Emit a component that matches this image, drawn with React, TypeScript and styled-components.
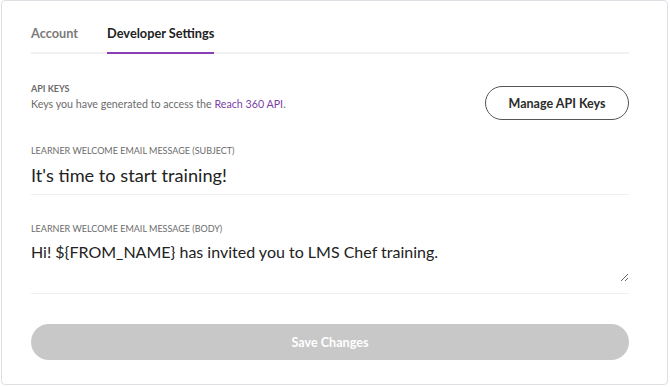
import styled, { createGlobalStyle } from "styled-components";

const GlobalStyle = createGlobalStyle`
  html, body {
    margin: 0;
    padding: 0;
    background: #ffffff;
  }
  body {
    font-family: Lato, "Open Sans", sans-serif;
    padding: 0 2px 2px 1px;
  }
`;

const App = () => {
  return (
    <>
      <GlobalStyle />
      <Card>
        <Tabs>
          <Tab>Account</Tab>
          <Tab active>Developer Settings</Tab>
        </Tabs>

        <ApiRow>
          <div>
            <Label bold>API KEYS</Label>
            <Desc>
              Keys you have generated to access the <Link>Reach 360 API</Link>.
            </Desc>
          </div>
          <OutlineButton>Manage API Keys</OutlineButton>
        </ApiRow>

        <Field>
          <Label>Learner welcome email message (subject)</Label>
          <Input defaultValue="It's time to start training!" />
        </Field>

        <Field gap={28}>
          <Label>Learner welcome email message (body)</Label>
          <TextArea defaultValue="Hi! ${FROM_NAME} has invited you to LMS Chef training." />
        </Field>

        <SaveButton disabled>Save Changes</SaveButton>
      </Card>
    </>
  );
};

export default App;

const Card = styled.div`
  box-sizing: border-box;
  width: 667px;
  height: 385px;
  border: 1px solid #dcdfe4;
  border-radius: 4px;
  padding: 21px 38px 0 29px;
  display: flex;
  flex-direction: column;
`;
const Tabs = styled.div`
  display: flex;
  gap: 29px;
  border-bottom: 2px solid #f1f1f1;
`;
const Tab = styled.div<{ active?: boolean }>`
  font-size: 12.75px;
  font-weight: 700;
  line-height: 15px;
  padding: 4px 0 11px;
  margin-bottom: -2px;
  color: ${(p) => (p.active ? "#222" : "#7a7a7a")};
  border-bottom: 2px solid ${(p) => (p.active ? "#8a3fb5" : "transparent")};
`;
const ApiRow = styled.div`
  display: flex;
  justify-content: space-between;
  align-items: flex-start;
  margin-top: 29px;
`;
const Label = styled.div<{ bold?: boolean }>`
  font-size: 9px;
  line-height: 11px;
  text-transform: uppercase;
  color: #6b6b6b;
  font-weight: ${(p) => (p.bold ? 700 : 400)};
`;
const Desc = styled.div`
  font-size: 10.7px;
  line-height: 14px;
  margin-top: 3px;
  color: #6b6b6b;
`;
const Link = styled.span`
  color: #7b3fa8;
`;
const OutlineButton = styled.button`
  box-sizing: border-box;
  width: 144px;
  height: 34px;
  margin-top: 3px;
  border: 1px solid #555;
  border-radius: 17px;
  background: #fff;
  font-family: inherit;
  font-size: 12.5px;
  font-weight: 700;
  color: #2b2b2b;
`;
const Field = styled.div<{ gap?: number }>`
  display: flex;
  flex-direction: column;
  margin-top: ${(p) => p.gap ?? 25}px;
  border-bottom: 1px solid #eeeeee;
`;
const Input = styled.input`
  border: none;
  outline: none;
  padding: 0;
  margin: 0;
  height: 38px;
  font-family: inherit;
  font-size: 18.2px;
  color: #222;
`;
const TextArea = styled.textarea`
  border: none;
  outline: none;
  padding: 0;
  margin: 6px 0 11px;
  height: 42px;
  resize: vertical;
  font-family: inherit;
  font-size: 16px;
  line-height: 24px;
  color: #222;
`;
const SaveButton = styled.button`
  box-sizing: border-box;
  margin-top: 30px;
  height: 36px;
  border: none;
  border-radius: 18px;
  background: #c8c8c8;
  color: #fff;
  font-family: inherit;
  font-size: 12.6px;
  font-weight: 700;
`;
